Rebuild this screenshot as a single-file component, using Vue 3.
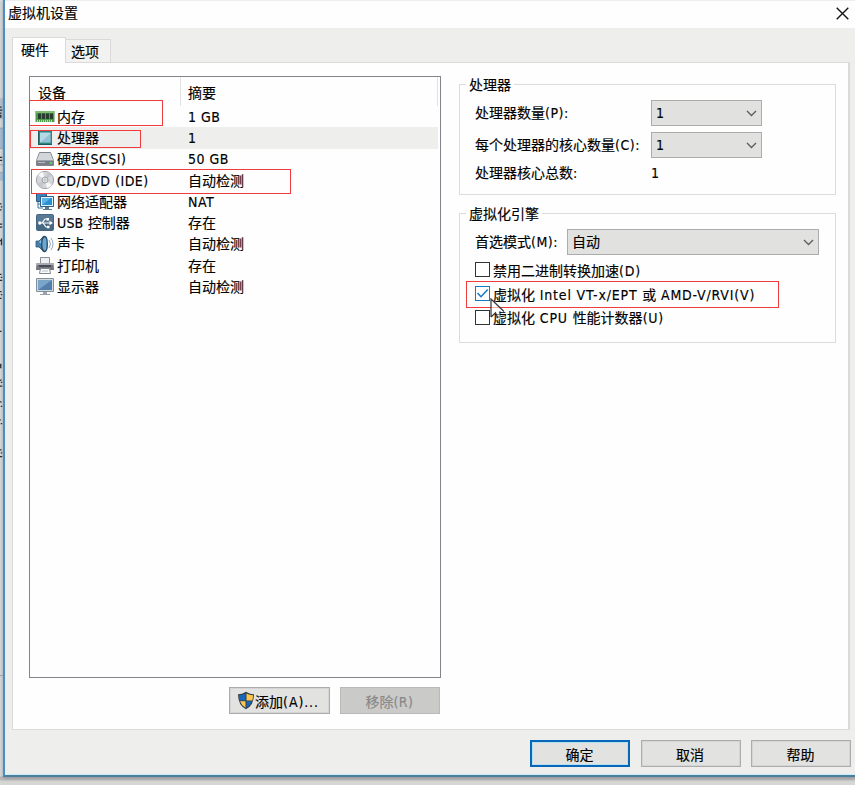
<script setup>
import { h, ref } from 'vue'

// Splits a mixed label into runs so Latin text gets its own tracking.
const Mixed = (props) => (props.text.match(/[\x20-\x7e]+|[^\x20-\x7e]+/g) || []).map((run) =>
  h('span', { class: /^[\x20-\x7e]/.test(run) ? 'latin' : 'han' }, run))
Mixed.props = ['text']

const devices = [
  { icon: 'memory', name: '内存', summary: '1 GB' },
  { icon: 'cpu', name: '处理器', summary: '1', selected: true },
  { icon: 'disk', name: '硬盘(SCSI)', summary: '50 GB' },
  { icon: 'cd', name: 'CD/DVD (IDE)', summary: '自动检测' },
  { icon: 'net', name: '网络适配器', summary: 'NAT' },
  { icon: 'usb', name: 'USB 控制器', summary: '存在' },
  { icon: 'sound', name: '声卡', summary: '自动检测' },
  { icon: 'printer', name: '打印机', summary: '存在' },
  { icon: 'display', name: '显示器', summary: '自动检测' },
]
const options = ref([
  { label: '禁用二进制转换加速(D)', checked: false },
  { label: '虚拟化 Intel VT-x/EPT 或 AMD-V/RVI(V)', checked: true },
  { label: '虚拟化 CPU 性能计数器(U)', checked: false },
])
</script>

<template>
  <div class="screen">
    <svg class="behind" width="4" height="785" viewBox="0 0 4 785">
      <rect width="4" height="785" fill="#d9dcdf" />
      <rect width="4" height="28" fill="#b5c3d3" />
      <rect y="40" width="4" height="27" fill="#a9bdd6" />
      <rect y="100" width="4" height="10" fill="#aabfd7" />
      <path d="M0 12h2M0 16h3M0 20h2M1 22v4M0 79h3M0 83h3M0 141h2M1 145h2M0 149h2M0 168h3M0 172h3M2 187v9M0 190h2M0 235h2M1 239h2M0 243h3M0 258h2M1 262h2M0 267h2M0 311h2M1 354v6M0 376h2M1 379h2M0 384h3M0 405h2M1 411h2M0 429h1M1 434h2M0 469h2M1 473h2M0 478h3" stroke="#22262e" stroke-width="1.800" fill="none" />
      <path d="M0 40h4M0 67h4M0 89h4M0 99h4M0 770h4" stroke="#8796a6" />
    </svg>

    <section class="dialog">
      <header class="titlebar">
        <span>虚拟机设置</span>
        <svg class="close" width="13" height="13" viewBox="0 0 13 13"><path d="M.7.7l11.6 11.6M12.3.7L.7 12.3" stroke="#151515" stroke-width="1.4" /></svg>
      </header>

      <div class="body">
        <nav class="tabs">
          <div class="tab active">硬件</div>
          <div class="tab">选项</div>
        </nav>

        <main class="page">
          <div class="left">
            <div class="list">
              <div class="list-head"><span class="col">设备</span><span class="col2">摘要</span></div>
              <div v-for="d in devices" :key="d.name" class="row" :class="{ selected: d.selected }">
                <span class="icon">
                  <svg v-if="d.icon === 'memory'" width="20" height="18" viewBox="0 0 20 18">
                    <path d="M.5 3h19v11H.5z" fill="#4b9b4b" /><path d="M.5 3h19v2H.5z" fill="#80bd72" />
                    <path d="M3 5.500h3V11H3zM7 5.500h3V11H7zM11 5.500h3V11h-3zM15 5.500h3V11h-3z" fill="#293c2e" />
                    <path d="M2 13h16" stroke="#d6cf78" stroke-dasharray="1 1" stroke-width="2" />
                  </svg>
                  <svg v-else-if="d.icon === 'cpu'" width="20" height="18" viewBox="0 0 20 18">
                    <path d="M3 1.500h14V16H3z" fill="#2b8380" /><path d="M3 15.500h14M3.500 2v13" stroke="#1d5b62" />
                    <path d="M5 3.500h10.500v10H5z" fill="#b5d8e5" /><path d="M6 13L15 5v8z" fill="#91bfd5" />
                  </svg>
                  <svg v-else-if="d.icon === 'disk'" width="20" height="18" viewBox="0 0 20 18">
                    <path d="M4.500 2.500h11l3 8v5h-17v-5z" fill="#c3c7cb" stroke="#81858b" />
                    <path d="M5 3h10l3 7H2z" fill="#d3d6da" /><path d="M2 10.500h16v4.500H2z" fill="#777e88" />
                    <path d="M3 12.500h7" stroke="#b6bcc2" /><path d="M15 12h2v2h-2z" fill="#55d765" />
                  </svg>
                  <svg v-else-if="d.icon === 'cd'" width="20" height="19" viewBox="0 0 20 19">
                    <circle cx="10" cy="9" r="8.600" fill="#d4d6da" stroke="#a0a4aa" />
                    <path d="M10 9L3 4A9 9 0 0 1 8 1zM10 9l7 5a9 9 0 0 1-5 3z" fill="#f8f8f8" />
                    <path d="M10 9L17 4A9 9 0 0 0 13 1zM10 9L2 13a9 9 0 0 0 5 4z" fill="#c3c7cd" />
                    <circle cx="10" cy="9" r="3" fill="#eef0f2" stroke="#9b9fa6" /><circle cx="10" cy="9" r="1.200" fill="#fff" stroke="#888" stroke-width=".6" />
                  </svg>
                  <svg v-else-if="d.icon === 'net'" width="20" height="18" viewBox="0 0 20 18">
                    <path d="M1.500.5h10v8h-10z" fill="#3586c5" stroke="#315a81" /><path d="M3 9v6h5M3 11h3" stroke="#3a739e" fill="none" />
                    <path d="M5.500 3.500h13v10h-13z" fill="#e4f3fb" stroke="#315c83" /><path d="M7 5h10v7H7z" fill="#2b8fd4" /><path d="M7 12l9-7H7z" fill="#5cb4e6" />
                    <path d="M10 14h4v2h3v1H8v-1h2z" fill="#597995" />
                  </svg>
                  <svg v-else-if="d.icon === 'usb'" width="20" height="18" viewBox="0 0 20 18">
                    <rect x="1" y="0" width="18" height="17" rx="2" fill="#476883" /><path d="M2 1h16v7H2z" fill="#587995" />
                    <path d="M4 9h11M7 9l3-4h2M8 9l3 4h2" stroke="#fff" stroke-width="1.200" fill="none" />
                    <circle cx="4.800" cy="9" r="1.700" fill="#fff" /><path d="M14.500 6.800l3.500 2.200-3.500 2.200zM11.500 4h2.500v2.500h-2.500zM12 11.800h2.500v2.500H12z" fill="#fff" />
                  </svg>
                  <svg v-else-if="d.icon === 'sound'" width="20" height="19" viewBox="0 0 20 19">
                    <path d="M1 6h3l5-5q3.500 8 0 16l-5-5H1z" fill="#447fad" stroke="#315878" stroke-width=".8" />
                    <path d="M4 7l5-5v9z" fill="#93c6e6" /><ellipse cx="9.500" cy="9" rx="2.800" ry="7.500" fill="#6ba8d2" stroke="#264865" stroke-width="1.300" />
                    <path d="M14 5q3 4 0 8M16 3q4 6 0 12" stroke="#8ba9bd" fill="none" />
                  </svg>
                  <svg v-else-if="d.icon === 'printer'" width="20" height="18" viewBox="0 0 20 18">
                    <path d="M5.500.5h9v8h-9z" fill="#eef0f2" stroke="#8b8e94" /><path d="M1.500 6h17l.5 7H1z" fill="#747780" /><path d="M2 6h16v2H2z" fill="#a6a9af" />
                    <path d="M4 8h12v2H4z" fill="#464b54" /><path d="M5.500 11.500h9l1 5h-11z" fill="#f8fafc" stroke="#81868e" /><path d="M7 14h6" stroke="#bbc1ca" />
                  </svg>
                  <svg v-else width="20" height="18" viewBox="0 0 20 18">
                    <path d="M1.500.5h17v13h-17z" fill="#d2d9df" stroke="#81909e" /><path d="M3 2h14v10H3z" fill="#527fac" /><path d="M3 2h14L3 12z" fill="#7ba4c9" />
                    <path d="M8 14h4v2h3v1H5v-1h3z" fill="#9ba2ac" />
                  </svg>
                </span>
                <span class="name" :class="d.icon"><Mixed :text="d.name" /></span>
                <span class="summary"><Mixed :text="d.summary" /></span>
              </div>
            </div>
            <div class="list-actions">
              <button class="btn add">
                <svg width="18" height="19" viewBox="0 0 18 19">
                  <path d="M9 .7q4 2.500 8 2.500 0 11-8 15-8-4-8-15 4 0 8-2.500z" fill="#353d46" />
                  <path d="M8.500 2.500v7H2.600Q2 7 2 4.300q4-.3 6.500-1.800z" fill="#1767b8" /><path d="M9.500 2.500v7h5.900q.6-2.500.6-5.200-4-.3-6.500-1.800zM8.500 10.300v6.500Q4.500 14.500 3 10.300z" fill="#fbc651" />
                  <path d="M9.500 10.300v6.500q4-2.300 5.500-6.500z" fill="#1767b8" />
                </svg><span><Mixed text="添加(A)..." /></span>
              </button>
              <button class="btn disabled" disabled><span><Mixed text="移除(R)" /></span></button>
            </div>
          </div>

          <div class="right">
            <section class="group cpu-group">
              <h2>处理器</h2>
              <div class="field"><label><Mixed text="处理器数量(P):" /></label><div class="select">1<svg width="11" height="7" viewBox="0 0 11 7"><path d="M1 1l4.500 4.500L10 1" /></svg></div></div>
              <div class="field"><label><Mixed text="每个处理器的核心数量(C):" /></label><div class="select">1<svg width="11" height="7" viewBox="0 0 11 7"><path d="M1 1l4.500 4.500L10 1" /></svg></div></div>
              <div class="field total"><label><Mixed text="处理器核心总数:" /></label><span>1</span></div>
            </section>
            <section class="group engine-group">
              <h2>虚拟化引擎</h2>
              <div class="field mode"><label><Mixed text="首选模式(M):" /></label><div class="select">自动<svg width="11" height="7" viewBox="0 0 11 7"><path d="M1 1l4.500 4.500L10 1" /></svg></div></div>
              <div v-for="o in options" :key="o.label" class="check" :class="{ on: o.checked }" @click="o.checked = !o.checked">
                <span class="box"><svg v-if="o.checked" width="13" height="13" viewBox="0 0 13 13"><path d="M1.500 6l3.500 3.700L11.700 2.500" fill="none" stroke="#1479c9" stroke-width="1.500" /></svg></span>
                <span class="check-label"><Mixed :text="o.label" /></span>
              </div>
            </section>
          </div>
        </main>

        <footer class="footer">
          <button class="btn primary">确定</button>
          <button class="btn">取消</button>
          <button class="btn">帮助</button>
        </footer>
      </div>
    </section>

    <div class="mark mark-memory"></div>
    <div class="mark mark-cpu"></div>
    <div class="mark mark-cd"></div>
    <div class="mark mark-vt"></div>
    <svg class="cursor" width="16" height="23" viewBox="0 0 16 23"><path d="M1 1v18l4.500-4.200 3 6.700 3-1.300-3-6.500h6z" fill="#fff" fill-opacity=".55" /><path d="M1 19V1l13 12.500M1 19l4.500-4.200 2.500 5.500" fill="none" stroke="#333" stroke-width="1.200" /></svg>
  </div>
</template>

<style>
body { margin: 0; overflow: hidden; }
.latin { letter-spacing: .5px; white-space: pre; }
</style>

<style scoped>
* { box-sizing: border-box; }
.screen {
  position: relative; display: flex; width: 855px; height: 785px; overflow: hidden;
  background: linear-gradient(#d9dcdf 0 776px, #b3b4b8 777px, #bebec0 780px, #d6d6d4 781px);
  font: 14px/20px "DejaVu Sans Condensed", "Noto Sans CJK SC", sans-serif; color: #000;
  -webkit-text-stroke: .15px currentColor;
}
.behind { flex: none; width: 3px; }
.dialog { flex: none; width: 852px; height: 777px; border-left: 2px solid #4a8fc4; border-bottom: 2px solid #4c7f9d; background: #eeeeed; box-shadow: 0 1px 4px #777a; }
.titlebar { display: flex; justify-content: space-between; height: 28px; padding: 2px 6px 0 3px; background: #fefefe; border-top: 1px solid #eee; }
.close { margin-top: 4px; }
.body { height: 747px; padding: 9px 0 0 6px; border-left: 1px solid #d9f2fa; border-bottom: 1px solid #c6eefa; }
.tabs { display: flex; align-items: flex-end; height: 25px; }
.tab { width: 45px; height: 23px; padding: 2px 0 0 5px; border: 1px solid #dadada; border-left: 0; border-bottom: 0; background: #f2f2f1; }
.tab.active { position: relative; z-index: 1; width: 54px; height: 26px; margin-bottom: -1px; padding: 2px 0 0 8px; border-left: 1px solid #dadada; background: #fefefe; }
.page { display: flex; width: 838px; height: 668px; padding: 13px 12px 0 16px; border: 1px solid #dadada; border-right-width: 2px; background: #fefefe; }
.left { flex: none; width: 412px; }
.list { height: 602px; border: 1px solid #82858a; background: #fefefe; }
.list-head { display: flex; height: 29.200px; }
.list-head span { padding: 6px 0 0 8px; }
.list-head .col { width: 151px; border-right: 1px solid #e2e2e2; }
.list-head .col2 { width: 257px; padding-left: 7px; border-right: 1px solid #e2e2e2; }
.row { display: flex; align-items: center; width: 408px; height: 21.250px; padding-left: 5px; white-space: nowrap; }
.row.selected { background: #eeeeed; }
.icon { display: flex; width: 22px; }
.name { width: 131px; }
.list-actions { display: flex; justify-content: flex-end; gap: 10px; margin-top: 9px; padding-right: 1px; }
.btn { display: flex; align-items: center; justify-content: center; width: 100px; height: 27px; padding: 3px 1px 0 0; border: 1px solid #acacac; border-radius: 0; background: #e2e2e1; box-shadow: inset 0 0 0 1px #d5d5d5; font: inherit; color: #000; }
.btn svg { margin-top: -2px; }
.btn.add { width: 101px; padding: 2px 3px 0 0; }
.btn.disabled { padding-top: 2px; border-color: #b9b9b9; background: #cacac9; box-shadow: none; color: #888; }
.right { flex: none; width: 377px; margin-left: 18px; padding-top: 8px; }
.group { width: 377px; border: 1px solid #dcdcdc; padding: 0 15px; }
.group h2 { width: max-content; height: 15px; margin: -10px 0 0 -9px; padding: 0 3px; background: #fefefe; font: inherit; }
.cpu-group { height: 111px; }
.engine-group { height: 130px; margin-top: 18px; }
.field { display: flex; align-items: center; height: 26px; margin-bottom: 6px; white-space: nowrap; }
h2 + .field { margin-top: 10px; }
.field label { width: 176px; }
.field.total { height: 17px; }
.select { display: flex; align-items: center; justify-content: space-between; width: 111px; height: 26px; padding: 0 4px; border: 1px solid #acacac; background: #e1e1e0; }
.select svg { fill: none; stroke: #5b5b5b; stroke-width: 1.300; }
.field.mode { margin-bottom: 3px; }
.mode label { width: 92px; }
.mode .select { width: 252px; }
.check { display: flex; align-items: center; height: 23.700px; white-space: nowrap; }
.check-label { padding-top: 2px; }
.check :deep(.latin) { letter-spacing: .8px; }
.btn.add :deep(.latin) { letter-spacing: .9px; }
.name.usb :deep(.latin) { letter-spacing: .2px; }
.box { width: 15px; height: 15px; margin-right: 3px; border: 1px solid #333; background: #fff; }
.box svg { display: block; }
.on .box { border-color: #1479c9; }
.footer { display: flex; gap: 10.500px; margin: 10px 0 0 518px; }
.primary { border: 2px solid #0868b8; box-shadow: inset 0 0 0 1px #b7e0f5; }
.mark { position: absolute; border: 1px solid #f43b3b; }
.mark-memory { left: 29px; top: 100px; width: 134px; height: 26px; }
.mark-cpu { left: 30px; top: 130px; width: 111px; height: 18px; }
.mark-cd { left: 31px; top: 169px; width: 260px; height: 25px; }
.mark-vt { left: 466px; top: 281px; width: 313px; height: 27px; }
.cursor { position: absolute; left: 490px; top: 298px; }
</style>
